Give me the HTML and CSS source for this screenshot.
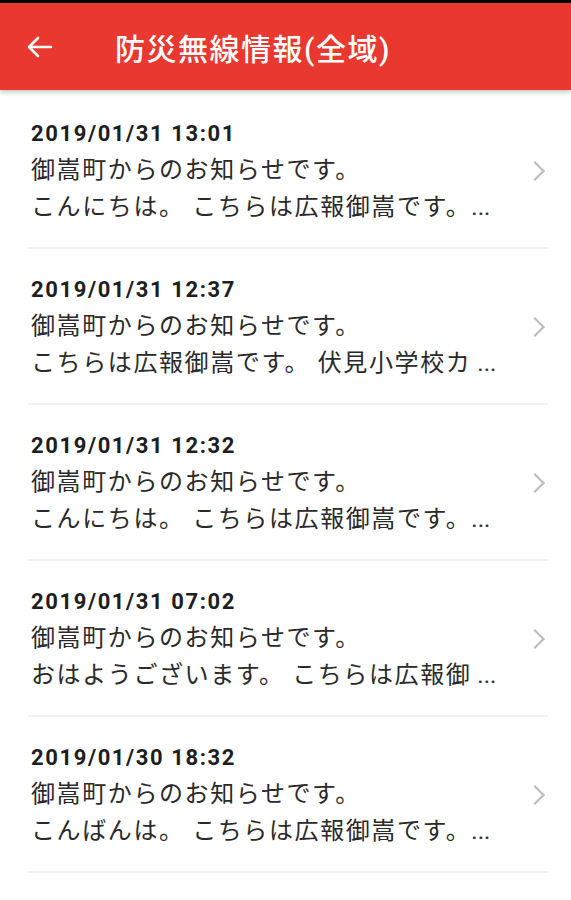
FILE: index.html
```html
<!DOCTYPE html>
<html>
<head>
<meta charset="utf-8">
<title>防災無線情報(全域)</title>
<link rel="stylesheet" href="styles.css">
</head>
<body>
<div id="main">
<div class="nav">
<a href="#" class="back">
<svg width="28" height="24" viewBox="0 0 28 24"><path d="M26 12H4M13 3L4 12l9 9" fill="none" stroke="#fff" stroke-width="2.6" stroke-linecap="round" stroke-linejoin="round"/></svg>
</a>
<span class="title">防災無線情報(全域)</span>
</div>
<ul class="list">
<li>
<div class="text">
<p class="date">2019/01/31 13:01</p>
<p>御嵩町からのお知らせです。</p>
<p>こんにちは。 こちらは広報御嵩です。<span class="more">...</span></p>
</div>
<span class="arrow"></span>
</li>
<li>
<div class="text">
<p class="date">2019/01/31 12:37</p>
<p>御嵩町からのお知らせです。</p>
<p>こちらは広報御嵩です。 伏見小学校カ<span class="more"> ...</span></p>
</div>
<span class="arrow"></span>
</li>
<li>
<div class="text">
<p class="date">2019/01/31 12:32</p>
<p>御嵩町からのお知らせです。</p>
<p>こんにちは。 こちらは広報御嵩です。<span class="more">...</span></p>
</div>
<span class="arrow"></span>
</li>
<li>
<div class="text">
<p class="date">2019/01/31 07:02</p>
<p>御嵩町からのお知らせです。</p>
<p>おはようございます。 こちらは広報御<span class="more"> ...</span></p>
</div>
<span class="arrow"></span>
</li>
<li>
<div class="text">
<p class="date">2019/01/30 18:32</p>
<p>御嵩町からのお知らせです。</p>
<p>こんばんは。 こちらは広報御嵩です。<span class="more">...</span></p>
</div>
<span class="arrow"></span>
</li>
</ul>
</div>
</body>
</html>
```

FILE: styles.css
```css
*{
margin: 0;
padding: 0;
}
body{
background: #fff;
border-top: 3px solid #000;
font-family: Roboto, "Noto Sans CJK JP", sans-serif;
}
.nav{
height: 87px;
background: #E8382F;
display: flex;
align-items: center;
box-shadow: 0 2px 5px rgba(0,0,0,0.25);
position: relative;
}
.back{
display: flex;
margin-left: 25px;
width: 28px;
height: 24px;
}
.title{
margin-left: 62px;
color: #fff;
font-size: 30px;
font-weight: 500;
letter-spacing: 1.5px;
}
.list{
list-style-type: none;
padding: 3px 23px 0 28px;
}
.list li{
display: flex;
align-items: center;
border-bottom: 2px solid #f2f2f2;
padding: 22px 0 21px 3px;
}
.text{
flex: 1;
}
.text p{
font-size: 24px;
line-height: 37px;
letter-spacing: 1.6px;
color: #2a2a2a;
white-space: nowrap;
}
.text .more{
letter-spacing: 0;
}
.text .date{
font-weight: 700;
font-size: 22px;
letter-spacing: 1.6px;
color: #1e1e1e;
}
.arrow{
width: 12px;
height: 12px;
border-top: 2px solid #bbb;
border-right: 2px solid #bbb;
transform: rotate(45deg);
margin-right: 6px;
}
```
